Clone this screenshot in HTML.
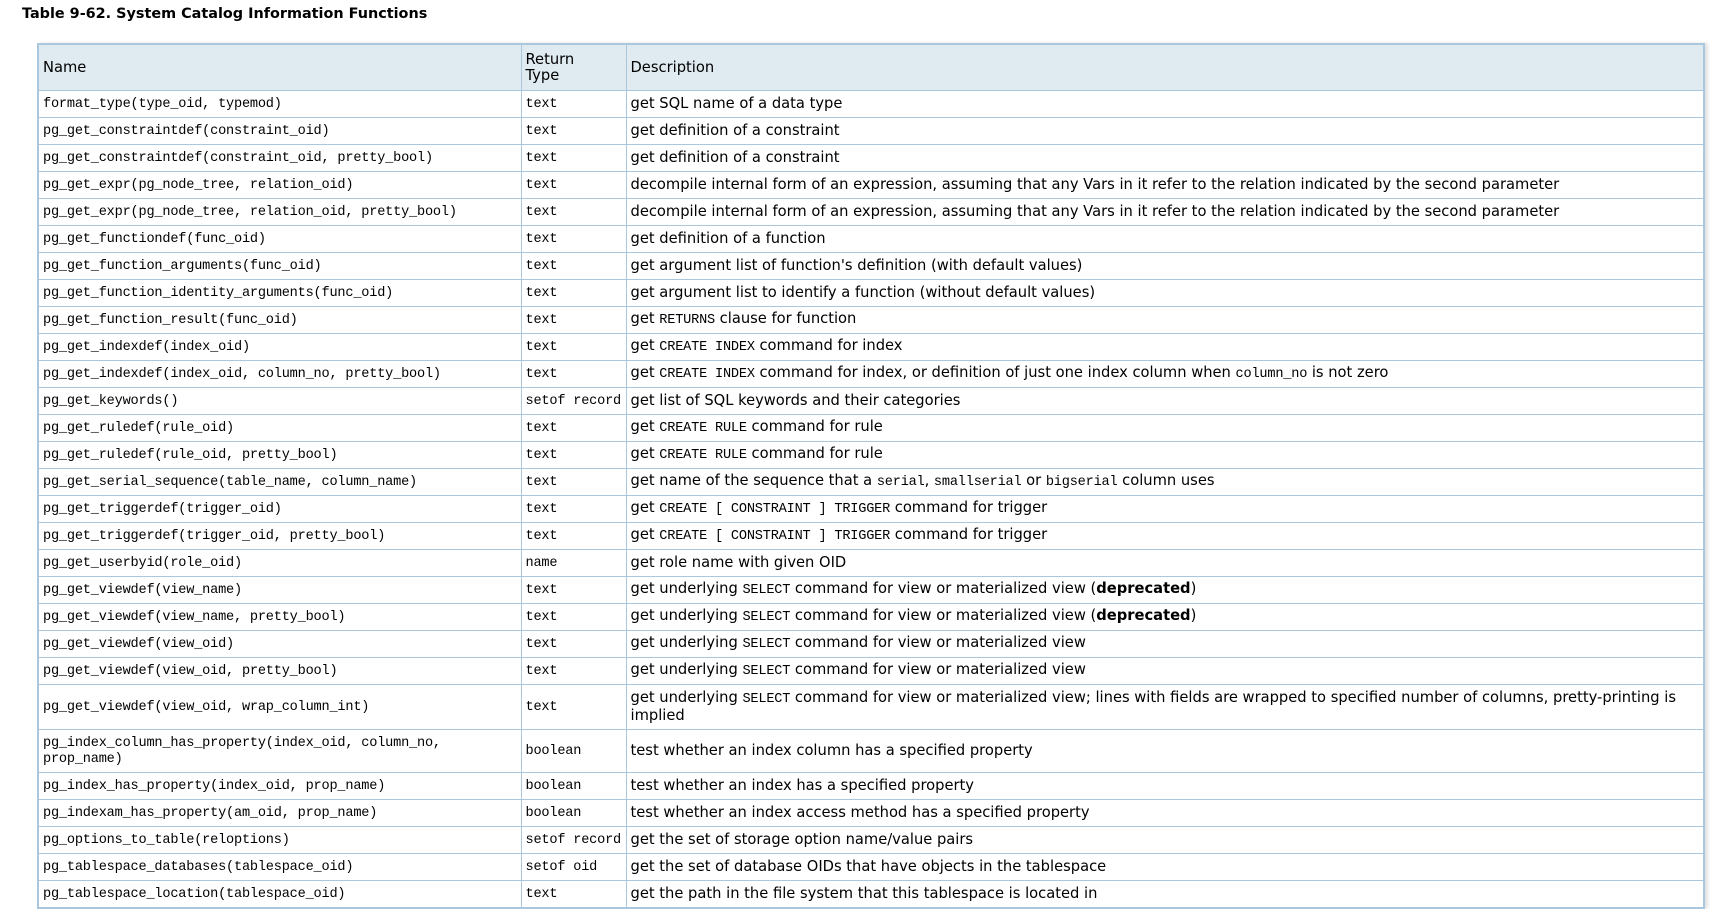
<!DOCTYPE html>
<html><head><meta charset="utf-8"><style>
body{margin:0;background:#fff;width:1710px;height:885px;overflow:hidden;font-family:"DejaVu Sans","Liberation Sans",sans-serif;font-size:14.7px;color:#000}
.t{position:absolute;left:22px;top:6px;font-weight:bold;font-size:14.4px;}
table{position:absolute;left:37px;top:43px;width:1668px;border-collapse:collapse;border:2px solid #abc7de;box-shadow:3px 0 3px #e4e4e4}
td,th{border:1px solid #abc7de;padding:0 4px;height:26px;text-align:left;vertical-align:middle;font-weight:normal;line-height:16px}
th{background:#dfeaf1;height:45px;font-size:14.7px}
td.n,td.r,code{font-family:"Liberation Mono","Noto Sans CJK SC",monospace;font-size:13.6px;letter-spacing:-0.2px}
td.n,td.r{padding-top:2px;height:24px}
</style></head><body>
<div class="t">Table 9-62. System Catalog Information Functions</div>
<table>
<colgroup><col style="width:483px"><col style="width:105px"><col></colgroup>
<tr><th>Name</th><th>Return<br>Type</th><th>Description</th></tr>
<tr><td class="n">format_type(type_oid, typemod)</td><td class="r">text</td><td>get SQL name of a data type</td></tr>
<tr><td class="n">pg_get_constraintdef(constraint_oid)</td><td class="r">text</td><td>get definition of a constraint</td></tr>
<tr><td class="n">pg_get_constraintdef(constraint_oid, pretty_bool)</td><td class="r">text</td><td>get definition of a constraint</td></tr>
<tr><td class="n">pg_get_expr(pg_node_tree, relation_oid)</td><td class="r">text</td><td>decompile internal form of an expression, assuming that any Vars in it refer to the relation indicated by the second parameter</td></tr>
<tr><td class="n">pg_get_expr(pg_node_tree, relation_oid, pretty_bool)</td><td class="r">text</td><td>decompile internal form of an expression, assuming that any Vars in it refer to the relation indicated by the second parameter</td></tr>
<tr><td class="n">pg_get_functiondef(func_oid)</td><td class="r">text</td><td>get definition of a function</td></tr>
<tr><td class="n">pg_get_function_arguments(func_oid)</td><td class="r">text</td><td>get argument list of function's definition (with default values)</td></tr>
<tr><td class="n">pg_get_function_identity_arguments(func_oid)</td><td class="r">text</td><td>get argument list to identify a function (without default values)</td></tr>
<tr><td class="n">pg_get_function_result(func_oid)</td><td class="r">text</td><td>get <code>RETURNS</code> clause for function</td></tr>
<tr><td class="n">pg_get_indexdef(index_oid)</td><td class="r">text</td><td>get <code>CREATE INDEX</code> command for index</td></tr>
<tr><td class="n">pg_get_indexdef(index_oid, column_no, pretty_bool)</td><td class="r">text</td><td>get <code>CREATE INDEX</code> command for index, or definition of just one index column when <code>column_no</code> is not zero</td></tr>
<tr><td class="n">pg_get_keywords()</td><td class="r">setof record</td><td>get list of SQL keywords and their categories</td></tr>
<tr><td class="n">pg_get_ruledef(rule_oid)</td><td class="r">text</td><td>get <code>CREATE RULE</code> command for rule</td></tr>
<tr><td class="n">pg_get_ruledef(rule_oid, pretty_bool)</td><td class="r">text</td><td>get <code>CREATE RULE</code> command for rule</td></tr>
<tr><td class="n">pg_get_serial_sequence(table_name, column_name)</td><td class="r">text</td><td>get name of the sequence that a <code>serial</code>, <code>smallserial</code> or <code>bigserial</code> column uses</td></tr>
<tr><td class="n">pg_get_triggerdef(trigger_oid)</td><td class="r">text</td><td>get <code>CREATE [ CONSTRAINT ] TRIGGER</code> command for trigger</td></tr>
<tr><td class="n">pg_get_triggerdef(trigger_oid, pretty_bool)</td><td class="r">text</td><td>get <code>CREATE [ CONSTRAINT ] TRIGGER</code> command for trigger</td></tr>
<tr><td class="n">pg_get_userbyid(role_oid)</td><td class="r">name</td><td>get role name with given OID</td></tr>
<tr><td class="n">pg_get_viewdef(view_name)</td><td class="r">text</td><td>get underlying <code>SELECT</code> command for view or materialized view (<b>deprecated</b>)</td></tr>
<tr><td class="n">pg_get_viewdef(view_name, pretty_bool)</td><td class="r">text</td><td>get underlying <code>SELECT</code> command for view or materialized view (<b>deprecated</b>)</td></tr>
<tr><td class="n">pg_get_viewdef(view_oid)</td><td class="r">text</td><td>get underlying <code>SELECT</code> command for view or materialized view</td></tr>
<tr><td class="n">pg_get_viewdef(view_oid, pretty_bool)</td><td class="r">text</td><td>get underlying <code>SELECT</code> command for view or materialized view</td></tr>
<tr><td class="n" style="height:42px">pg_get_viewdef(view_oid, wrap_column_int)</td><td class="r">text</td><td>get underlying <code>SELECT</code> command for view or materialized view; lines with fields are wrapped to specified number of columns, pretty-printing is<br>implied</td></tr>
<tr><td class="n" style="height:40px">pg_index_column_has_property(index_oid, column_no,<br>prop_name)</td><td class="r">boolean</td><td>test whether an index column has a specified property</td></tr>
<tr><td class="n">pg_index_has_property(index_oid, prop_name)</td><td class="r">boolean</td><td>test whether an index has a specified property</td></tr>
<tr><td class="n">pg_indexam_has_property(am_oid, prop_name)</td><td class="r">boolean</td><td>test whether an index access method has a specified property</td></tr>
<tr><td class="n">pg_options_to_table(reloptions)</td><td class="r">setof record</td><td>get the set of storage option name/value pairs</td></tr>
<tr><td class="n">pg_tablespace_databases(tablespace_oid)</td><td class="r">setof oid</td><td>get the set of database OIDs that have objects in the tablespace</td></tr>
<tr><td class="n">pg_tablespace_location(tablespace_oid)</td><td class="r">text</td><td>get the path in the file system that this tablespace is located in</td></tr>
</table>
</body></html>
